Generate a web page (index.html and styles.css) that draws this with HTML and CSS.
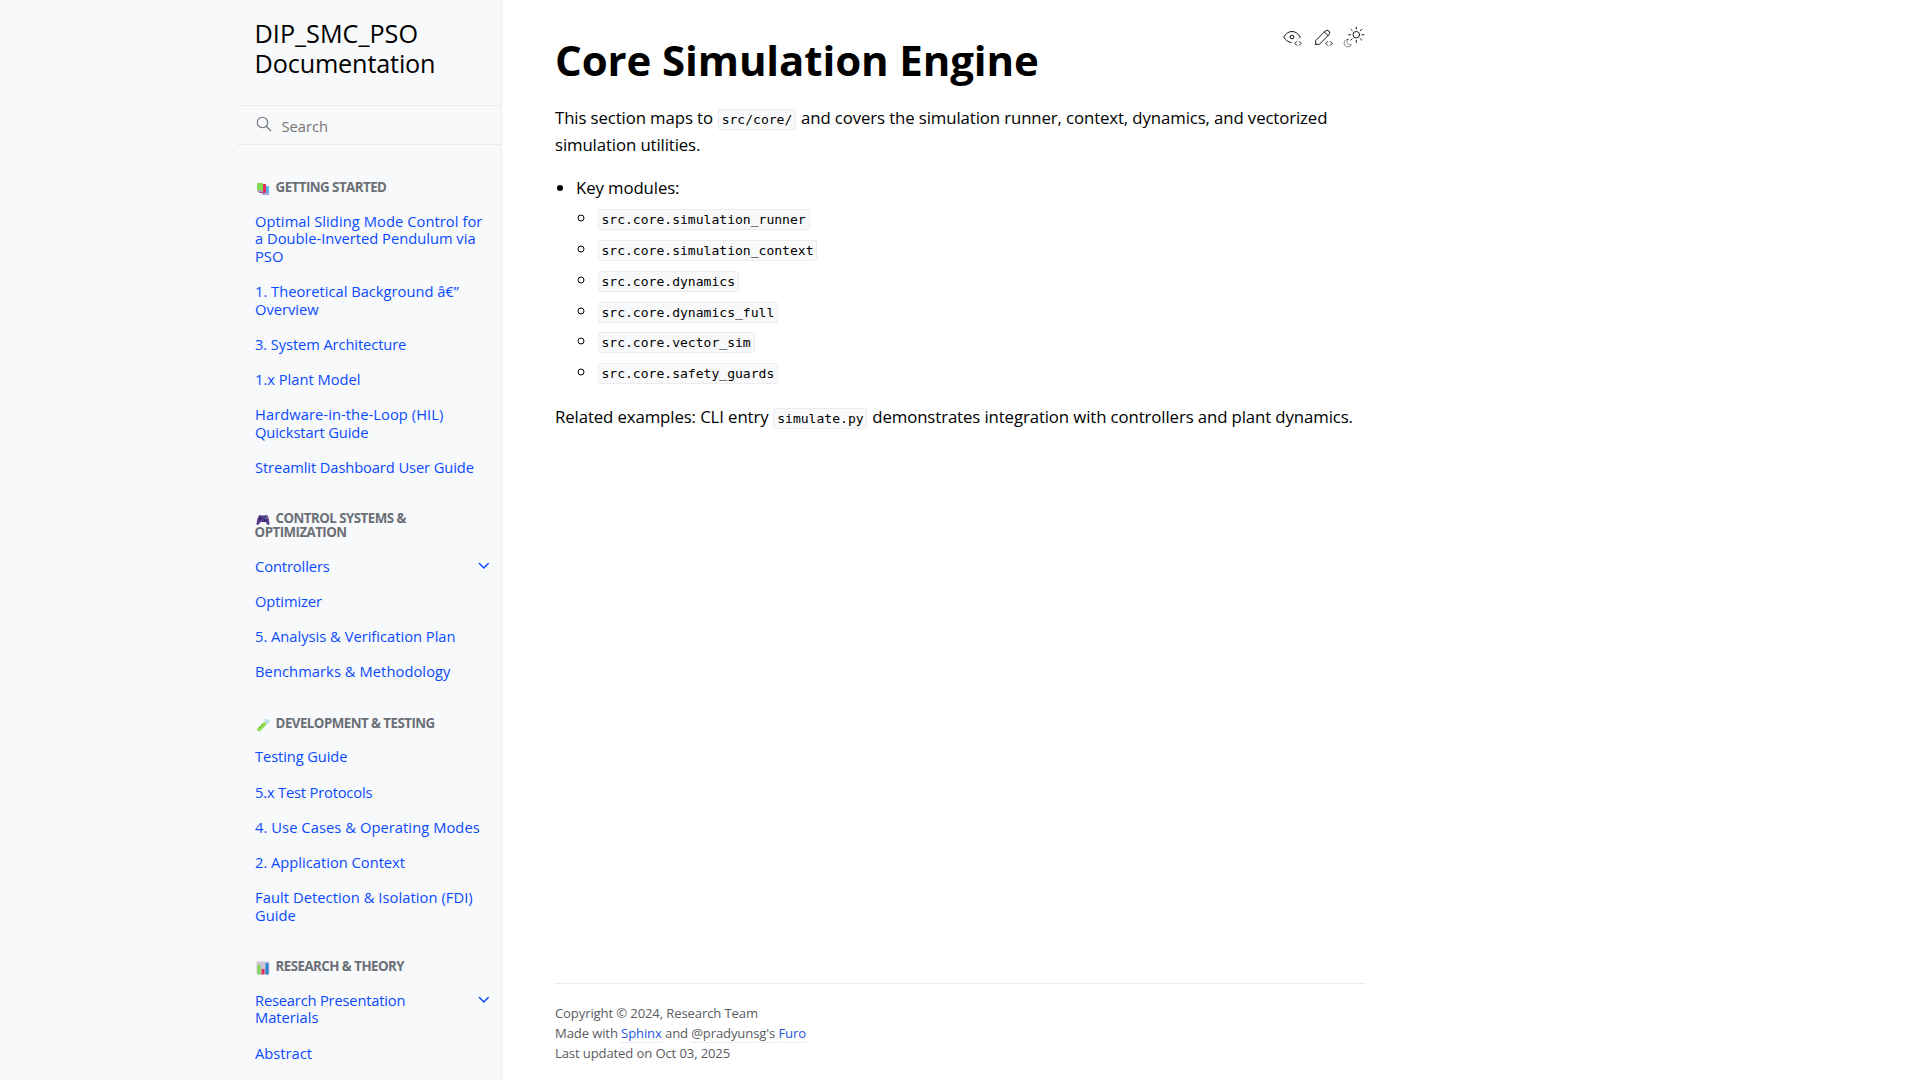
FILE: index.html
```html
<!DOCTYPE html>
<html lang="en">
<head>
<meta charset="utf-8">
<title>Core Simulation Engine</title>
<link rel="stylesheet" href="styles.css">
</head>
<body>
<svg class="symbols" aria-hidden="true">
  <symbol id="chevron" viewBox="0 0 24 24"><path d="M6 9l6 6 6-6" fill="none" stroke="currentColor" stroke-width="2" stroke-linecap="round" stroke-linejoin="round"/></symbol>
</svg>
<div class="page">
  <aside class="sidebar">
    <div class="sidebar-inner">
      <a class="brand">DIP_SMC_PSO<br><span class="name">Documentation</span></a>
      <form class="search">
        <svg viewBox="0 0 24 24"><circle cx="10" cy="10" r="7"/><path d="M21 21l-6-6"/></svg>
        <span>Search</span>
      </form>
      <nav class="tree">
        <p class="caption"><svg viewBox="0 0 14 14"><path fill="#56b4ee" d="M6 4h7v9H6z"/><path fill="#a9a5d8" d="M6 11h7v2H7z"/><path fill="#b3487a" d="M3 3h7v8H3z"/><path fill="#e22d55" d="M7 2h3v8H7z"/><path fill="#83d955" d="M1 1h6v7H1z"/><path fill="#a7a2ba" d="M1 8h6v2H2z"/></svg>GETTING STARTED</p>
        <ul>
          <li><a><span class="loose">Optimal Sliding Mode Control for</span><br>a Double-Inverted Pendulum via<br>PSO</a></li>
          <li><a>1. Theoretical Background â€”<br>Overview</a></li>
          <li><a class="snug">3. System Architecture</a></li>
          <li><a>1.x Plant Model</a></li>
          <li><a><span class="loose">Hardware-in-the-Loop (HIL)</span><br><span class="snug">Quickstart Guide</span></a></li>
          <li><a class="snug">Streamlit Dashboard User Guide</a></li>
        </ul>
        <p class="caption"><svg viewBox="0 0 14 14"><path fill="#523a86" d="M3 2.500Q4 1.500 5.500 2.500h3Q10 1.500 11.500 2.500Q13.500 6 13.500 11Q12.500 13 11 11L9.500 9h-5L3 11.300Q1 13 .5 11Q.5 6 3 2.500z"/><circle cx="4.500" cy="5.500" r="1.200" fill="#30245e"/><circle cx="9" cy="7.500" r="1.200" fill="#30245e"/><circle cx="10.500" cy="4" r=".6" fill="#76c15d"/><circle cx="11.600" cy="5.200" r=".6" fill="#df5b73"/><circle cx="9.500" cy="5.200" r=".6" fill="#4aa9e9"/></svg>CONTROL SYSTEMS &amp;<br>OPTIMIZATION</p>
        <ul>
          <li><a class="snug">Controllers</a><svg class="chev"><use href="#chevron"/></svg></li>
          <li><a class="snug">Optimizer</a></li>
          <li><a>5. Analysis &amp; Verification Plan</a></li>
          <li><a class="loose">Benchmarks &amp; Methodology</a></li>
        </ul>
        <p class="caption"><svg viewBox="0 0 14 14"><path d="M3 11.500L11.500 3" stroke="#c4e5f7" stroke-width="4" stroke-linecap="round"/><path d="M3 11.500L8.500 6" stroke="#94e04c" stroke-width="3.600" stroke-linecap="round"/><path d="M9 1l4 4" stroke="#b5dcf4" stroke-width="1.500"/><circle cx="4" cy="9.500" r=".7" fill="#469c31"/><circle cx="6.500" cy="7" r=".7" fill="#469c31"/></svg>DEVELOPMENT &amp; TESTING</p>
        <ul>
          <li><a class="snug">Testing Guide</a></li>
          <li><a class="tight">5.x Test Protocols</a></li>
          <li><a class="loose">4. Use Cases &amp; Operating Modes</a></li>
          <li><a>2. Application Context</a></li>
          <li><a><span class="loose">Fault Detection &amp; Isolation (FDI)</span><br>Guide</a></li>
        </ul>
        <p class="caption"><svg viewBox="0 0 14 14"><rect x=".5" y=".5" width="13" height="13" rx="1" fill="#cbc5d5"/><path fill="#82d957" d="M1.500 4h3v9.500h-3z"/><path fill="#dc2f5c" d="M5.500 8h3v5.500h-3z"/><path fill="#2784d4" d="M9.500 2h3v11.500h-3z"/></svg>RESEARCH &amp; THEORY</p>
        <ul>
          <li><a><span class="tight">Research Presentation</span><br>Materials</a><svg class="chev"><use href="#chevron"/></svg></li>
          <li><a>Abstract</a></li>
        </ul>
      </nav>
    </div>
  </aside>
  <div class="main">
    <div class="tools">
      <svg viewBox="0 0 24 24"><path d="M10 12a2 2 0 1 0 4 0a2 2 0 0 0-4 0M11.110 17.958c-3.209-.307-5.910-2.293-8.110-5.958c2.400-4 5.400-6 9-6c3.600 0 6.600 2 9 6c-.210.352-.427.688-.647 1.008M20 21l2-2l-2-2M17 17l-2 2l2 2"/></svg>
      <svg viewBox="0 0 24 24"><path d="M4 20h4l10.500-10.500a2.828 2.828 0 1 0-4-4l-10.500 10.500v4M13.500 6.500l4 4M20 21l2-2l-2-2M17 17l-2 2l2 2"/></svg>
      <svg viewBox="0 0 24 24"><path class="moon" d="M5.411 14.504C5.471 14.504 5.532 14.504 5.591 14.504C3.639 16.319 4.383 19.569 6.931 20.352C7.693 20.586 8.512 20.551 9.250 20.252C8.023 23.207 4.056 23.725 2.110 21.184C.166 18.642 1.702 14.949 4.874 14.536C5.051 14.512 5.231 14.500 5.411 14.500z"/><circle cx="14.500" cy="9.550" r="3.600"/><path d="M14.500 3.250v-2M14.500 15.850v2M10.044 5.094L8.630 3.680M19 14.050l1.414 1.414M8.200 9.550h-2M20.800 9.550h2M10.044 14.006L8.630 15.420M19 5.050l1.414-1.414"/></svg>
    </div>
    <article>
      <h1>Core Simulation Engine</h1>
      <p>This section maps to <code>src/core/</code> and covers the simulation runner, context, dynamics, and vectorized<br>simulation utilities.</p>
      <ul>
        <li>Key modules:
          <ul>
            <li><code>src.core.simulation_runner</code></li>
            <li><code>src.core.simulation_context</code></li>
            <li><code>src.core.dynamics</code></li>
            <li><code>src.core.dynamics_full</code></li>
            <li><code>src.core.vector_sim</code></li>
            <li><code>src.core.safety_guards</code></li>
          </ul>
        </li>
      </ul>
      <p>Related examples: CLI entry <code>simulate.py</code> demonstrates integration with controllers and plant dynamics.</p>
    </article>
    <footer>
      <div>Copyright © 2024, Research Team</div>
      <div>Made with <a class="link">Sphinx</a> and <a class="muted">@pradyunsg's</a> <a class="link">Furo</a></div>
      <div>Last updated on Oct 03, 2025</div>
    </footer>
  </div>
</div>
</body>
</html>
```

FILE: styles.css
```css
html { font-size: 17.6px; }
body {
  margin: 0;
  color: #000;
  background: #fff;
  font-family: "Open Sans", "Noto Sans", sans-serif;
  font-size: 16.8px;
  line-height: 26.4px;
}
.symbols { display: none; }
.page { display: flex; height: 1080px; overflow: hidden; }
.sidebar {
  box-sizing: border-box;
  width: 502px;
  flex: none;
  display: flex;
  justify-content: flex-end;
  background: #f8f9fb;
  border-right: 1px solid #eeebee;
}
.sidebar-inner { width: 264px; }
.brand {
  display: block;
  padding: 18px 17.6px 27px;
  font-size: 25.2px;
  line-height: 30px;
}
.name { letter-spacing: -.15px; }
.search {
  display: flex;
  align-items: center;
  box-sizing: border-box;
  height: 40px;
  padding: 2px 18px 0;
  gap: 8.500px;
  border: solid #eeebee;
  border-width: 1px 0;
  color: #757575;
  font-size: 14.7px;
}
.search svg { width: 18px; height: 18px; margin-top: -4px; fill: none; stroke: #6b6f76; stroke-width: 1.5; stroke-linecap: round; }
.tree { padding-top: 8.8px; }
.tree ul { list-style: none; margin: 0; padding: 0; }
.tree li { display: flex; justify-content: space-between; color: #0a4bff; }
.tree a { padding: 8.8px 0 8.8px 18px; font-size: 14.7px; line-height: 17.6px; white-space: nowrap; }
.chev { width: 17.6px; height: 17.6px; margin: 8px 8.8px 0 0; }
.loose { letter-spacing: .07px; }
.snug { letter-spacing: -.1px; }
.tight { letter-spacing: -.18px; }
.caption {
  margin: 17.6px 0 0;
  padding: 8.8px 0 9.6px 17.6px;
  color: #6b6f76;
  font-size: 13.3px;
  font-weight: 700;
  line-height: 14px;
  letter-spacing: -.53px;
}
.caption + ul { margin-bottom: -.2px; }
.caption svg { width: 14px; height: 14px; margin: -3px 6px -3px 1px; vertical-align: -1px; fill: none; }
.main {
  position: relative;
  box-sizing: border-box;
  width: 810px;
  margin-left: 53px;
  display: flex;
  flex-direction: column;
  justify-content: space-between;
}
.tools { position: absolute; top: 25.6px; right: 0; display: flex; gap: 8.8px; }
.tools svg { width: 22px; height: 22px; fill: none; stroke: #000; stroke-width: 1; stroke-linecap: round; stroke-linejoin: round; }
.moon { opacity: .5; }
article { padding-top: 32px; letter-spacing: -.11px; }
h1 { margin: 0 0 16.6px; font-size: 42px; line-height: 55px; font-weight: 700; }
article p { margin: 0; line-height: 27px; white-space: nowrap; }
article ul { margin: 17px 0 17.6px; padding-left: 21px; }
article ul ul { margin: 4.200px 0 0; }
article ul ul li + li { margin-top: 4.400px; }
code {
  margin: 0 .6px;
  padding: 2px 2.860px;
  border: 1px solid #eeebee;
  border-radius: 3px;
  background: #f8f9fb;
  font-family: "DejaVu Sans Mono", monospace;
  font-size: 13.060px;
  line-height: 1;
  letter-spacing: 0;
}
footer {
  padding: 19px 0 17px;
  border-top: 1px solid #eeebee;
  color: #5a5c63;
  font-size: 13.100px;
  line-height: 20px;
  letter-spacing: -.13px;
}
.link { color: #2757dd; border-bottom: 1px solid #eeebee; }
.muted { border-bottom: 1px solid #eeebee; }
```
